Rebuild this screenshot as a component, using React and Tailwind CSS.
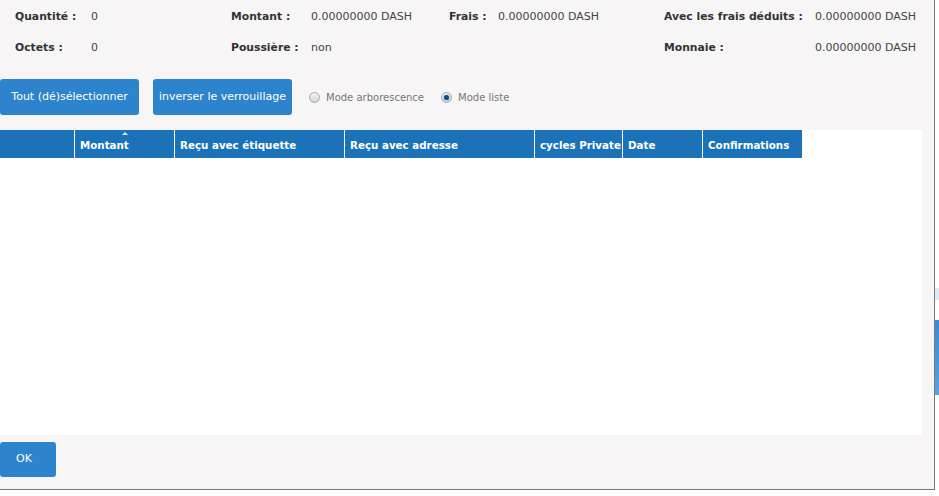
import React from 'react';

const font = { fontFamily: '"DejaVu Sans", Verdana, sans-serif' };

function Label({ w, children }) {
  return <span className="shrink-0 font-bold text-[#333] text-[10.8px]" style={{ width: w }}>{children}</span>;
}

function Value({ w, children }) {
  return <span className="shrink-0 text-[#444] text-[11px]" style={{ width: w }}>{children}</span>;
}

function Radio({ checked, label }) {
  return (
    <label className="flex items-center gap-[6px] text-[10px] text-[#777]">
      <span className="w-[11px] h-[11px] rounded-full border border-[#a8a8a8] bg-gradient-to-b from-[#f2f2f2] to-[#d6d6d6] flex items-center justify-center">
        {checked && <span className="w-[5px] h-[5px] rounded-full bg-[#0b4f86] shadow-[0_0_2px_#3aa0e8]" />}
      </span>
      {label}
    </label>
  );
}

const cols = [
  { w: 74, label: '' },
  { w: 100, label: 'Montant', sort: true },
  { w: 170, label: 'Reçu avec étiquette' },
  { w: 190, label: 'Reçu avec adresse' },
  { w: 88, label: 'cycles Private' },
  { w: 80, label: 'Date' },
  { w: 100, label: 'Confirmations' },
];

export default function App() {
  return (
    <div className="w-[939px] h-[496px] bg-white flex overflow-hidden" style={font}>
      <div className="w-[935px] h-[490px] bg-[#f7f5f6] border-r border-b border-[#7a7a7a] flex flex-col shrink-0">
        {/* infos */}
        <div className="flex items-center h-[16px] mt-[9px] pl-[15px]">
          <Label w={76}>Quantité :</Label>
          <Value w={140}>0</Value>
          <Label w={80}>Montant :</Label>
          <Value w={138}>0.00000000 DASH</Value>
          <Label w={49}>Frais :</Label>
          <Value w={166}>0.00000000 DASH</Value>
          <Label w={151}>Avec les frais déduits :</Label>
          <Value w={110}>0.00000000 DASH</Value>
        </div>
        <div className="flex items-center h-[16px] mt-[15px] pl-[15px]">
          <Label w={76}>Octets :</Label>
          <Value w={140}>0</Value>
          <Label w={80}>Poussière :</Label>
          <Value w={353}>non</Value>
          <Label w={151}>Monnaie :</Label>
          <Value w={110}>0.00000000 DASH</Value>
        </div>

        {/* buttons */}
        <div className="flex items-center mt-[23px] h-[36px]">
          <button className="h-[36px] w-[139px] rounded-[3px] bg-[#2d84cc] text-white text-[11px]">Tout (dé)sélectionner</button>
          <button className="h-[36px] w-[139px] ml-[14px] rounded-[3px] bg-[#2d84cc] text-white text-[11px]">inverser le verrouillage</button>
          <div className="ml-[17px]"><Radio label="Mode arborescence" /></div>
          <div className="ml-[17px]"><Radio checked label="Mode liste" /></div>
        </div>

        {/* table */}
        <div className="mt-[15px] w-[922px] h-[305px] bg-white">
          <div className="flex h-[28px]">
            {cols.map((c, i) => (
              <div
                key={i}
                className={`relative box-border h-full bg-[#1b72b9] flex items-center pl-[5px] pt-[3px] text-white font-bold text-[10.3px] whitespace-nowrap overflow-hidden ${i > 0 ? 'border-l border-white' : ''}`}
                style={{ width: c.w }}
              >
                {c.sort && (
                  <span className="absolute left-1/2 top-[2px] -translate-x-1/2 w-0 h-0 border-l-[3px] border-r-[3px] border-b-[3px] border-l-transparent border-r-transparent border-b-[#dbe6f0]" />
                )}
                {c.label}
              </div>
            ))}
          </div>
        </div>

        {/* footer */}
        <div className="mt-[7px]">
          <button className="h-[35px] w-[56px] rounded-[3px] bg-[#2d84cc] text-white text-[11px] text-left pl-[16px]">OK</button>
        </div>
      </div>
      <div className="flex-1 flex flex-col">
        <div className="h-[288px]" />
        <div className="h-[12px] bg-[#d8ecfa]" />
        <div className="h-[20px]" />
        <div className="h-[75px] bg-gradient-to-b from-[#3a8ad2] to-[#5aa2e0]" />
      </div>
    </div>
  );
}
